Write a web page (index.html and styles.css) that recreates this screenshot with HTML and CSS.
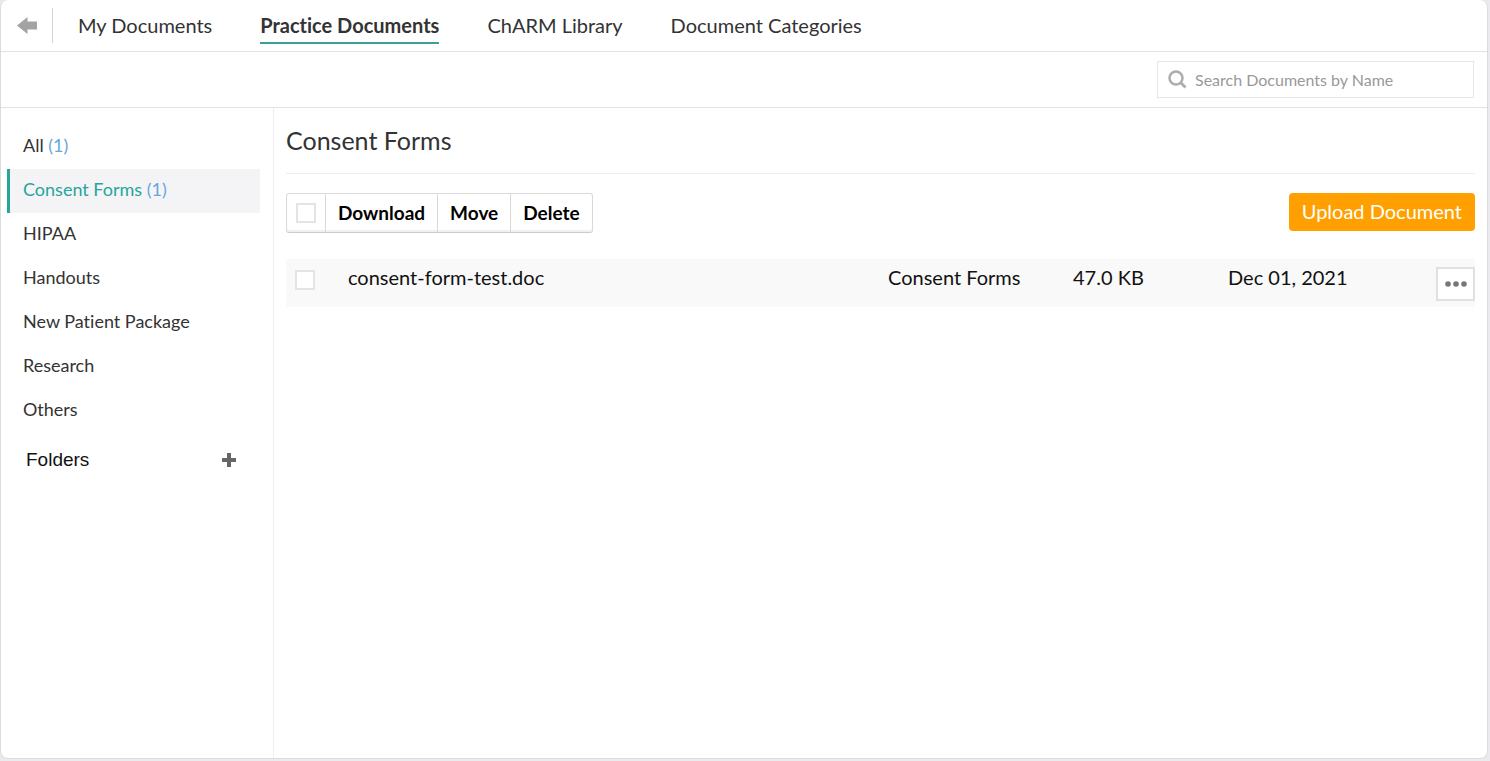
FILE: index.html
```html
<!DOCTYPE html>
<html lang="en">
<head>
    <meta charset="UTF-8">
    <meta name="viewport" content="width=device-width, initial-scale=1.0">
    <title>Practice Documents</title>
    <link rel="stylesheet" href="styles.css">
</head>
<body>

<div class="panel">
    <!-- Tabs -->
    <header class="topbar">
        <button class="back" type="button" aria-label="Back">
            <svg width="20" height="17" viewBox="0 0 20 17"><path d="M0 8.5 10.500 0v4.500H20v8h-9.500V17z" fill="#a3a3a3"/></svg>
        </button>
        <nav class="tabs">
            <a href="#">My Documents</a>
            <a href="#" class="active">Practice Documents</a>
            <a href="#">ChARM Library</a>
            <a href="#">Document Categories</a>
        </nav>
    </header>

    <!-- Search -->
    <div class="searchbar">
        <label class="search">
            <svg width="19" height="19" viewBox="0 0 19 19" fill="none" stroke="#adadad"><circle cx="8" cy="8" r="6.500" stroke-width="2.500"/><path d="M12.800 12.800 17.500 17.500" stroke-width="3"/></svg>
            <input type="text" placeholder="Search Documents by Name" aria-label="Search Documents by Name">
        </label>
    </div>

    <div class="content">
        <!-- Categories -->
        <aside class="sidebar">
            <ul class="categories">
                <li><a href="#">All <span class="count">(1)</span></a></li>
                <li><a href="#" class="active">Consent Forms <span class="count">(1)</span></a></li>
                <li><a href="#">HIPAA</a></li>
                <li><a href="#">Handouts</a></li>
                <li><a href="#">New Patient Package</a></li>
                <li><a href="#">Research</a></li>
                <li><a href="#">Others</a></li>
            </ul>
            <div class="folders">
                <span>Folders</span>
                <button class="add" type="button" aria-label="Add folder">
                    <svg width="14" height="14" viewBox="0 0 14 14"><path d="M5 0h4v5h5v4H9v5H5V9H0V5h5z" fill="#666"/></svg>
                </button>
            </div>
        </aside>

        <!-- Documents -->
        <main class="documents">
            <h1>Consent Forms</h1>

            <div class="toolbar">
                <div class="actions">
                    <label class="select-all"><input type="checkbox" aria-label="Select all"></label>
                    <button type="button">Download</button>
                    <button type="button">Move</button>
                    <button type="button">Delete</button>
                </div>
                <button class="upload" type="button">Upload Document</button>
            </div>

            <table class="files">
                <tr>
                    <td class="check"><input type="checkbox" aria-label="Select consent-form-test.doc"></td>
                    <td>consent-form-test.doc</td>
                    <td class="category">Consent Forms</td>
                    <td class="size">47.0 KB</td>
                    <td class="date">Dec 01, 2021</td>
                    <td class="menu">
                        <button class="more" type="button" aria-label="More actions">
                            <svg width="22" height="6" viewBox="0 0 22 6" fill="#777"><circle cx="3" cy="3" r="2.800"/><circle cx="11" cy="3" r="2.800"/><circle cx="19" cy="3" r="2.800"/></svg>
                        </button>
                    </td>
                </tr>
            </table>
        </main>
    </div>
</div>

</body>
</html>
```
FILE: styles.css
```css
* {
    box-sizing: border-box;
}

body {
    margin: 0;
    padding: 0 2px 2px 0;
    background-color: #ebebef;
    font-family: Lato, "Liberation Sans", sans-serif;
    font-size: 20px;
    font-variant-ligatures: none;
    line-height: 24px;
    color: #333;
}

a {
    color: inherit;
    text-decoration: none;
}

button {
    padding: 0;
    border: none;
    background: none;
    font-family: inherit;
    font-size: 20px;
    line-height: 24px;
    cursor: pointer;
}

svg {
    display: block;
}

.panel {
    display: flex;
    flex-direction: column;
    min-height: calc(100vh - 2px);
    border: 1px solid #dcdcdf;
    border-top: none;
    border-radius: 8px;
    background-color: #fff;
}

.topbar {
    display: flex;
    align-items: center;
    height: 52px;
    border-bottom: 1px solid #e2e2e2;
}

.back {
    display: flex;
    align-items: center;
    width: 52px;
    height: 35px;
    padding-left: 16px;
    border-right: 1px solid #d5d5d5;
}

.tabs {
    display: flex;
    gap: 48px;
    padding: 3px 0 0 25px;
}

.tabs a {
    padding: 2px 0 5px;
    border-bottom: 2px solid transparent;
}

.tabs .active {
    border-color: #3a9f9b;
    font-weight: bold;
}

.searchbar {
    display: flex;
    justify-content: flex-end;
    padding: 9px 13px;
    border-bottom: 1px solid #e2e2e2;
}

.search {
    display: flex;
    align-items: center;
    gap: 8px;
    width: 317px;
    height: 37px;
    padding: 0 10px;
    border: 1px solid #e6e6e6;
}

.search input {
    flex: 1;
    min-width: 0;
    padding: 0;
    border: none;
    outline: none;
    font-family: inherit;
    font-size: 16px;
}

.search input::placeholder {
    color: #999;
}

.content {
    display: flex;
    flex: 1;
}

.sidebar {
    width: 273px;
    padding: 17px 13px 0 6px;
    border-right: 1px solid #eee;
    font-size: 18px;
}

.categories {
    margin: 0;
    padding: 0;
    list-style: none;
}

.categories a {
    display: block;
    height: 44px;
    padding: 8px 13px;
    border-left: 3px solid transparent;
}

.categories .active {
    border-color: #26a69a;
    background-color: #f4f4f7;
    color: #26a69a;
}

.count {
    color: #64a8de;
}

.folders {
    display: flex;
    align-items: center;
    justify-content: space-between;
    padding: 15px 24px 0 19px;
    font-family: "Liberation Sans", Arial, sans-serif;
    font-size: 19px;
    color: #111;
}

.documents {
    flex: 1;
    padding: 17px 12px 0;
}

h1 {
    margin: 0 0 19px;
    padding-bottom: 18px;
    border-bottom: 1px solid #eee;
    font-size: 25px;
    font-weight: normal;
    line-height: 30px;
}

.toolbar {
    display: flex;
    align-items: flex-start;
    justify-content: space-between;
    margin-bottom: 26px;
}

.actions {
    display: flex;
    height: 40px;
    border: 1px solid #d9d9d9;
    border-bottom-color: #ccc;
    border-radius: 3px;
    box-shadow: inset 0 -2px 1px #f0f0f0;
}

.actions button {
    padding: 0 12px;
    border-left: 1px solid #d9d9d9;
    font-size: 19px;
    font-weight: bold;
    color: #000;
}

.select-all {
    display: flex;
    align-items: center;
    padding: 0 9px;
}

input[type="checkbox"] {
    display: block;
    appearance: none;
    width: 20px;
    height: 20px;
    margin: 0;
    border: 2px solid #e4e4e4;
    background-color: #fff;
}

.upload {
    height: 38px;
    padding: 0 13px 3px;
    border-radius: 4px;
    background-color: #ffa000;
    color: #fff;
}

.files {
    width: 100%;
    border-collapse: collapse;
    table-layout: fixed;
    background-color: #f9f9f9;
    color: #111;
}

.files td {
    height: 48px;
    padding: 6px 0 0;
    vertical-align: top;
}

.files .check {
    width: 62px;
    padding: 11px 0 0 9px;
}

.category {
    width: 185px;
}

.size {
    width: 155px;
}

.date {
    width: 208px;
}

.files .menu {
    width: 39px;
    padding-top: 8px;
}

.more {
    display: flex;
    align-items: center;
    justify-content: center;
    width: 39px;
    height: 34px;
    border: 2px solid #e0e0e0;
    background-color: #fff;
}
```
